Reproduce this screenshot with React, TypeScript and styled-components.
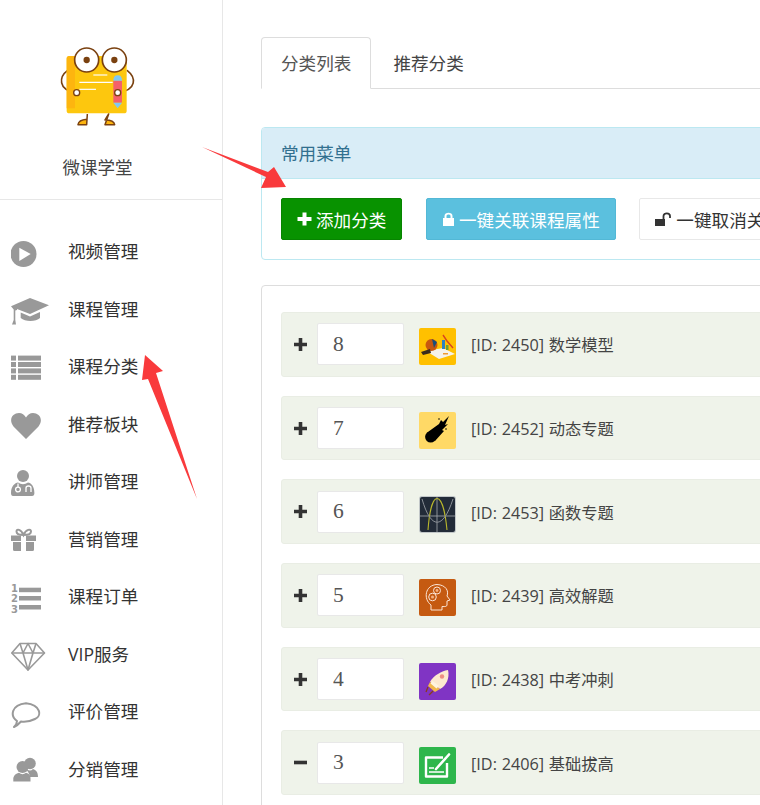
import React from "react";
import styled, { createGlobalStyle } from "styled-components";

const GlobalStyle = createGlobalStyle`
    html, body {
        margin: 0;
        padding: 0;
        height: 100%;
        overflow: hidden;
        background: #fff;
    }
    body {
        font-family: "Open Sans", "Noto Sans CJK SC", sans-serif;
        color: #333;
    }
`;

const Page = styled.div`
    position: relative;
    display: flex;
    width: 760px;
    height: 805px;
    overflow: hidden;
`;

const Sidebar = styled.aside`
    flex: 0 0 223px;
    box-sizing: border-box;
    border-right: 1px solid #e7e7e7;
`;

const Brand = styled.div`
    box-sizing: border-box;
    height: 200px;
    padding: 40px 27px 0 0;
    border-bottom: 1px solid #e7e7e7;
    display: flex;
    flex-direction: column;
    align-items: center;
`;

const BrandName = styled.div`
    margin-top: 18px;
    font-size: 17.5px;
    line-height: 28px;
    color: #444;
`;

const Nav = styled.nav`
    padding-top: 22.2px;
`;

const NavItem = styled.div`
    display: flex;
    align-items: center;
    height: 57.5px;
    padding-left: 11px;
    font-size: 17.6px;
    color: #333;
`;

const NavIcon = styled.svg`
    flex: 0 0 57px;
    width: 57px;
    height: 32px;
    margin-top: 3.6px;
    fill: #999;
`;

const Main = styled.main`
    flex: 0 0 1000px;
    box-sizing: border-box;
    padding: 37px 0 0 38px;
`;

const Tabs = styled.div`
    display: flex;
    height: 52px;
    box-sizing: border-box;
    border-bottom: 1px solid #ddd;
`;

const Tab = styled.div<{ $active?: boolean }>`
    box-sizing: border-box;
    height: 52px;
    padding: 0 19px;
    margin-right: 2px;
    line-height: 50px;
    font-size: 17.6px;
    color: ${(props) => (props.$active ? "#555" : "#444")};
    background: ${(props) => (props.$active ? "#fff" : "transparent")};
    border: 1px solid ${(props) => (props.$active ? "#ddd" : "transparent")};
    border-bottom-color: ${(props) => (props.$active ? "#fff" : "transparent")};
    border-radius: 4px 4px 0 0;
`;

const MenuPanel = styled.section`
    margin-top: 38px;
    border: 1px solid #bce8f1;
    border-radius: 4px;
    overflow: hidden;
`;

const MenuHeading = styled.div`
    box-sizing: border-box;
    height: 51px;
    padding-left: 19px;
    line-height: 50px;
    font-size: 17.6px;
    color: #31708f;
    background: #d9edf7;
    border-bottom: 1px solid #bce8f1;
`;

const MenuBody = styled.div`
    display: flex;
    gap: 23.6px;
    padding: 19px;
`;

const variants = {
    success: "background: #089200; border-color: #078400; color: #fff;",
    info: "background: #5bc0de; border-color: #53b8d6; color: #fff;",
    plain: "background: #fff; border-color: #e8e8e8; color: #333;",
};

const Button = styled.button<{ $variant: keyof typeof variants }>`
    display: flex;
    align-items: center;
    gap: 4px;
    box-sizing: border-box;
    height: 42px;
    padding: 0 15px;
    border: 1px solid;
    border-radius: 2px;
    font-family: inherit;
    font-size: 17.6px;
    white-space: nowrap;
    ${(props) => variants[props.$variant]}
`;

const ButtonIcon = styled.svg<{ $width: number }>`
    width: ${(props) => props.$width}px;
    height: 16px;
    fill: currentColor;
    flex: none;
`;

const ListPanel = styled.section`
    margin-top: 25px;
    padding: 26px 19px 0;
    height: 600px;
    border: 1px solid #ddd;
    border-radius: 4px;
`;

const Row = styled.div`
    display: flex;
    align-items: center;
    box-sizing: border-box;
    height: 64.7px;
    margin-bottom: 19px;
    padding-left: 12px;
    background: #eff3ea;
    border: 1px solid #e9ede4;
    border-radius: 3px;
`;

const Toggle = styled.svg`
    flex: none;
    width: 13px;
    height: 13px;
    margin-right: 10px;
    fill: #333;
`;

const SortInput = styled.input`
    box-sizing: border-box;
    flex: none;
    width: 87px;
    height: 42px;
    margin-right: 15px;
    padding: 0 15px;
    background: #fff;
    border: 1px solid #e8e8e8;
    border-radius: 2px;
    font-family: "Liberation Serif", serif;
    font-size: 21.5px;
    color: #555;
`;

const Thumb = styled.svg`
    flex: none;
    width: 37px;
    height: 37px;
    margin: 5px 15px 0 0;
    border-radius: 2px;
`;

const RowLabel = styled.span`
    font-size: 16.25px;
    color: #444;
    word-spacing: 0.5px;
`;

const Arrows = styled.svg`
    position: absolute;
    left: 0;
    top: 0;
    width: 760px;
    height: 805px;
    pointer-events: none;
    fill: #f93a3c;
`;

const Logo = () => (
    <svg width="95" height="95" viewBox="0 0 285 285">
        <g fill="none" stroke="#7a4110" strokeWidth="5" strokeLinecap="round">
            <path d="M52 92 C28 110 22 150 78 158" />
            <path d="M232 92 C258 112 262 150 204 158" />
        </g>
        <rect x="50" y="48" width="180" height="172" rx="8" fill="#fdc70e" />
        <path d="M58 48 H75 V205 H50 V56 Q50 48 58 48 Z" fill="#fdb50f" />
        <g stroke="#fff" strokeWidth="3.5">
            <path d="M130 105 H172" />
            <path d="M88 127 H188" />
            <path d="M88 148 H138" />
        </g>
        <rect x="190" y="122" width="26" height="66" fill="#f4606a" />
        <path d="M190 122 Q190 106 203 106 Q216 106 216 122 Z" fill="#80c8f2" />
        <path d="M190 188 H216 L203 205 Z" fill="#80c8f2" />
        <circle cx="110" cy="60" r="36" fill="#fff" stroke="#7a4110" strokeWidth="5" />
        <circle cx="193" cy="60" r="36" fill="#fff" stroke="#7a4110" strokeWidth="5" />
        <circle cx="110" cy="60" r="9.5" fill="#7a4110" />
        <circle cx="193" cy="60" r="9.5" fill="#7a4110" />
        <circle cx="80" cy="158" r="9" fill="#fff" stroke="#7a4110" strokeWidth="4" />
        <circle cx="203" cy="158" r="9" fill="#fff" stroke="#7a4110" strokeWidth="4" />
        <g stroke="#7a4110" strokeWidth="4.5" fill="#fdb50f" strokeLinejoin="round">
            <path d="M112 222 L110 254 H84 Q86 240 110 238" />
            <path d="M176 222 L165 240 Q192 240 194 254 H165 Z" />
        </g>
    </svg>
);

const navItems: { label: string; icon: React.ReactNode }[] = [
    {
        label: "视频管理",
        icon: (
            <>
                <circle cx="12.5" cy="17" r="13" />
                <path d="M8.3 10.7 V24 L19.7 17 Z" fill="#fff" />
            </>
        ),
    },
    {
        label: "课程管理",
        icon: (
            <>
                <path d="M19 4 L38 11.3 L19 20 L6 15 V16 L4.3 16.5 V26 L5 30.5 H1 L2.7 26 V15.6 L0 12.3 Z" />
                <path d="M9.7 18.5 L19 22.5 L29 18 V24 C25 28 14 28 9.7 24 Z" />
            </>
        ),
    },
    {
        label: "课程分类",
        icon: (
            <>
                {[3.6, 10, 16.4, 22.8].map((y) => (
                    <React.Fragment key={y}>
                        <rect x="0" y={y} width="5" height="5" />
                        <rect x="7" y={y} width="23" height="5" />
                    </React.Fragment>
                ))}
            </>
        ),
    },
    {
        label: "推荐板块",
        icon: <path d="M15 30 L2.5 17.5 C-3 10 2 4 8 4 C11 4 13.5 6 15 8.5 C16.5 6 19 4 22 4 C28 4 33 10 27.5 17.5 Z" />,
    },
    {
        label: "讲师管理",
        icon: (
            <>
                <circle cx="12" cy="9" r="6" />
                <path d="M2 29 Q0 29 0 26 C0 19 4 16 7 15.5 Q12 19 17 15.5 C20 16 23.4 19 23.4 26 Q23.4 29 21 29 Z" />
                <g fill="none" stroke="#fff" strokeWidth="1.3">
                    <path d="M7 16.5 V20" />
                    <circle cx="7" cy="22.5" r="2.4" />
                    <path d="M15 25 V21 Q15 19 17.5 19 Q20 19 20 21 V25" />
                </g>
            </>
        ),
    },
    {
        label: "营销管理",
        icon: (
            <>
                <g fill="none" stroke="#999" strokeWidth="2">
                    <path d="M12.5 11 C9 11 5.5 10 5.5 7.5 C5.5 4.5 10 5 12.5 11 C15 5 20 4.5 20 7.5 C20 10 16 11 12.5 11 Z" />
                </g>
                <path d="M0 11.5 H10 V17 H0 Z M15 11.5 H25 V17 H15 Z M2 18 H10 V27 H3.5 Q2 27 2 25.5 Z M15 18 H23 V25.5 Q23 27 21.5 27 H15 Z" />
            </>
        ),
    },
    {
        label: "课程订单",
        icon: (
            <>
                <text x="0" y="10" fontSize="10" fontWeight="700" fontFamily="DejaVu Sans, sans-serif" textLength="6">1</text>
                <text x="0" y="20" fontSize="10" fontWeight="700" fontFamily="DejaVu Sans, sans-serif" textLength="6">2</text>
                <text x="0" y="31" fontSize="10" fontWeight="700" fontFamily="DejaVu Sans, sans-serif" textLength="6">3</text>
                <rect x="8" y="5.7" width="22" height="4.5" />
                <rect x="8" y="14" width="22" height="4.5" />
                <rect x="8" y="23" width="22" height="4.5" />
            </>
        ),
    },
    {
        label: "VIP服务",
        icon: (
            <g fill="none" stroke="#999" strokeWidth="1.6" strokeLinejoin="round">
                <path d="M9 4.5 H25 L33.5 14 L17 31 L0.8 14 Z" />
                <path d="M0.8 14 H33.5 M9 4.5 L12 14 L17 31 L22 14 L25 4.5 M12 14 L17 4.5 L22 14" />
            </g>
        ),
    },
    {
        label: "评价管理",
        icon: (
            <path
                d="M6 24 C-1 19 0 8 15 6.3 C30 8 31 19 24 22 C19 24.5 14 25 10 24.5 Q7 28 3 30 Q6 27 6 24 Z"
                fill="none"
                stroke="#999"
                strokeWidth="2"
                strokeLinejoin="round"
            />
        ),
    },
    {
        label: "分销管理",
        icon: (
            <>
                <circle cx="19" cy="9.5" r="5.8" />
                <path d="M16 15 Q19 18 22 15 C25 16 27 18 27 23 H19 C18 19 17 17 15 16 Z" />
                <circle cx="11.5" cy="13" r="6" />
                <path d="M2.3 27.6 V24 C3 21 5 19.5 8 18.8 Q11.5 21.5 15 18.8 C18 19.5 19.5 21 19.5 24 V27.6 Z" />
            </>
        ),
    },
];

const thumbs: Record<string, React.ReactNode> = {
    chart: (
        <>
            <rect width="37" height="37" fill="#ffc000" />
            <path d="M7 23 L24 20 L36 26 L20 31 Z" fill="#f5f2ea" />
            <circle cx="12.5" cy="17" r="6" fill="#c8570f" />
            <path d="M13 11 L18 14 L15 20 Z" fill="#1c4d78" />
            <path d="M2 24 L11 21 L12 25 L4 27 Z" fill="#3a2a1c" />
            <rect x="23" y="12" width="3" height="9" fill="#2d82c0" />
            <rect x="27" y="17" width="2.5" height="5" fill="#6b9e3a" />
            <path d="M24 7 L28 13 L34 20" fill="none" stroke="#d8451e" strokeWidth="1.4" />
            <rect x="24" y="25" width="5" height="1.5" fill="#ef9a2e" />
        </>
    ),
    comet: (
        <>
            <rect width="37" height="37" fill="#ffd966" />
            <circle cx="11.7" cy="25" r="5.6" fill="#000" />
            <path d="M7.5 21 L20 12 L22 8 L24 10 L30 4 L26 13 L29 12 L23 18 L25 19 L16 29 Z" fill="#000" />
            <circle cx="27" cy="17" r="0.8" fill="#000" />
            <circle cx="20" cy="7" r="0.8" fill="#000" />
        </>
    ),
    graph: (
        <>
            <rect width="37" height="37" rx="2" fill="#c2c7c9" />
            <rect x="1" y="1" width="35" height="35" rx="2" fill="#222b38" />
            <path d="M1 20 H36 M18 1 V36" stroke="#a6abb0" strokeWidth="0.8" />
            <path d="M9 34 C12 -8 24 -8 28 34" fill="none" stroke="#b9b72c" strokeWidth="1.1" />
            <path d="M3 3 C12 34 24 34 34 3" fill="none" stroke="#8b9097" strokeWidth="1" />
        </>
    ),
    head: (
        <>
            <rect width="37" height="37" fill="#c55a11" />
            <g fill="none" stroke="#fbe5d6" strokeWidth="1">
                <path d="M12 31 V26 C4 20 6 6 18 5.5 C27 6 30 12 28 17 L31 21 L28 22 V26 Q28 28 23 27.5 V31 Z" />
                <circle cx="18" cy="11.5" r="3.5" />
                <circle cx="13.5" cy="18" r="3.8" />
            </g>
            <circle cx="18" cy="11.5" r="1.4" fill="#f4b183" />
            <circle cx="13.5" cy="18" r="1.5" fill="#f4b183" />
        </>
    ),
    rocket: (
        <>
            <rect width="37" height="37" fill="#8034c4" />
            <path d="M29 7 C31 15 27 23 21 26 L11 19 C14 13 22 8 29 7 Z" fill="#fde9cf" />
            <circle cx="23" cy="13.5" r="2.2" fill="#ef8d84" />
            <path d="M11 19 L21 26 L16 29 L9 23 Z" fill="#f2b84b" />
            <path d="M13.5 18 L20 23 L17.5 25.5 L11.5 20.5 Z" fill="#fff4de" />
            <path d="M9 24 L7 29 M14 28 L10 32" stroke="#8a3d1a" strokeWidth="1.3" />
        </>
    ),
    note: (
        <>
            <rect width="37" height="37" fill="#2eb64c" />
            <path d="M24 10.5 H7 V29.5 H28 V16" fill="none" stroke="#fff" strokeWidth="2.4" strokeLinejoin="round" />
            <path d="M17 22 L30 7.5" stroke="#fff" strokeWidth="2.6" strokeLinecap="round" />
            <path d="M10 21 H15 M10 25 H25" stroke="#fff" strokeWidth="1.6" />
        </>
    ),
};

const categories = [
    { sort: "8", id: 2450, name: "数学模型", thumb: "chart", open: false },
    { sort: "7", id: 2452, name: "动态专题", thumb: "comet", open: false },
    { sort: "6", id: 2453, name: "函数专题", thumb: "graph", open: false },
    { sort: "5", id: 2439, name: "高效解题", thumb: "head", open: false },
    { sort: "4", id: 2438, name: "中考冲刺", thumb: "rocket", open: false },
    { sort: "3", id: 2406, name: "基础拔高", thumb: "note", open: true },
];

const App: React.FC = () => {
    return (
        <Page>
            <GlobalStyle />
            <Sidebar>
                <Brand>
                    <Logo />
                    <BrandName>微课学堂</BrandName>
                </Brand>
                <Nav>
                    {navItems.map((item) => (
                        <NavItem key={item.label}>
                            <NavIcon viewBox="0 0 57 32">{item.icon}</NavIcon>
                            {item.label}
                        </NavItem>
                    ))}
                </Nav>
            </Sidebar>
            <Main>
                <Tabs>
                    <Tab $active>分类列表</Tab>
                    <Tab>推荐分类</Tab>
                </Tabs>
                <MenuPanel>
                    <MenuHeading>常用菜单</MenuHeading>
                    <MenuBody>
                        <Button $variant="success">
                            <ButtonIcon $width={15} viewBox="0 0 15 16">
                                <path d="M5.5 1.5 H9.5 V6 H14.5 V10 H9.5 V14.5 H5.5 V10 H0.5 V6 H5.5 Z" />
                            </ButtonIcon>
                            添加分类
                        </Button>
                        <Button $variant="info">
                            <ButtonIcon $width={13} viewBox="1 0 13 16">
                                <path d="M2 7 H3.5 V5 C3.5 0.8 11.5 0.8 11.5 5 V7 H13 V15 H2 Z M5.5 7 H9.5 V5 C9.5 3 5.5 3 5.5 5 Z" fillRule="evenodd" />
                            </ButtonIcon>
                            一键关联课程属性
                        </Button>
                        <Button $variant="plain">
                            <ButtonIcon $width={17} viewBox="0 0 17 16">
                                <path d="M0 8 H10 V15 H0 Z" />
                                <path d="M8.5 8 V5 C8.5 1.5 15 1.5 15 5 V7" fill="none" stroke="currentColor" strokeWidth="1.8" />
                            </ButtonIcon>
                            一键取消关联课程属性
                        </Button>
                    </MenuBody>
                </MenuPanel>
                <ListPanel>
                    {categories.map((category) => (
                        <Row key={category.id}>
                            <Toggle viewBox="0 0 13 13">
                                {category.open ? (
                                    <rect x="0" y="4.7" width="13" height="3.6" />
                                ) : (
                                    <path d="M4.7 0 H8.3 V4.7 H13 V8.3 H8.3 V13 H4.7 V8.3 H0 V4.7 H4.7 Z" />
                                )}
                            </Toggle>
                            <SortInput readOnly defaultValue={category.sort} />
                            <Thumb viewBox="0 0 37 37">{thumbs[category.thumb]}</Thumb>
                            <RowLabel>
                                [ID: {category.id}] {category.name}
                            </RowLabel>
                        </Row>
                    ))}
                </ListPanel>
            </Main>
            <Arrows viewBox="0 0 760 805">
                <polygon points="202,147 268,172 274,167 286,187 261,188 266,177" />
                <polygon points="145,355 163,371 156,373 197,499 148,379 142,380" />
            </Arrows>
        </Page>
    );
};

export default App;
